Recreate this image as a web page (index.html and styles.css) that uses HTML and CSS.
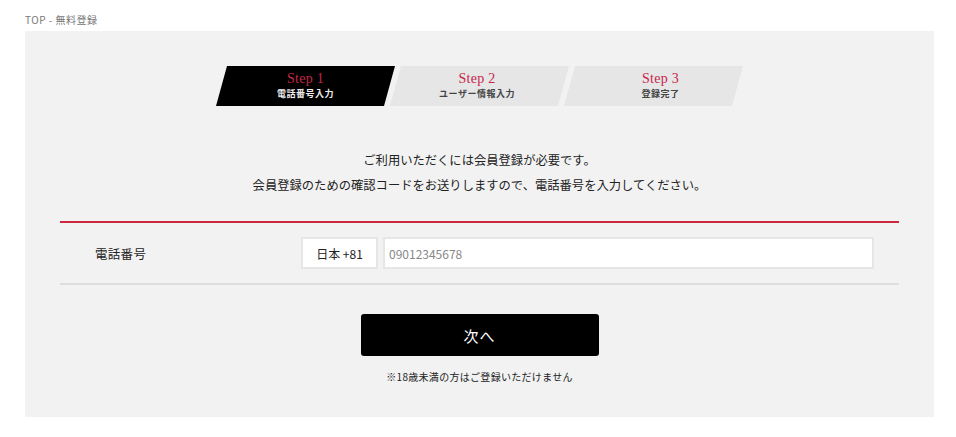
FILE: index.html
```html
<!DOCTYPE html>
<html lang="ja">
<head>
<meta charset="utf-8">
<link rel="stylesheet" href="styles.css">
</head>
<body>
<div class="breadcrumb">TOP - 無料登録</div>
<main class="panel">
  <ol class="steps">
    <li class="step active"><span class="step-num">Step 1</span><span class="step-label">電話番号入力</span></li>
    <li class="step step-2"><span class="step-num">Step 2</span><span class="step-label">ユーザー情報入力</span></li>
    <li class="step step-3"><span class="step-num">Step 3</span><span class="step-label">登録完了</span></li>
  </ol>
  <p class="lead">ご利用いただくには会員登録が必要です。<br>会員登録のための確認コードをお送りしますので、電話番号を入力してください。</p>
  <div class="form-row">
    <div class="form-label">電話番号</div>
    <div class="form-fields">
      <div class="country">日本 +81</div>
      <div class="phone">09012345678</div>
    </div>
  </div>
  <div class="actions">
    <button class="next">次へ</button>
    <p class="note">※18歳未満の方はご登録いただけません</p>
  </div>
</main>
</body>
</html>
```
FILE: styles.css
```css
* { box-sizing: border-box; }
body {
  margin: 0;
  background: #fff;
  font-family: "Noto Sans CJK JP", "Noto Sans", sans-serif;
  color: #222;
}
.breadcrumb {
  padding: 13px 0 0 25px;
  height: 31px;
  font-size: 10px;
  line-height: 14px;
  color: #777;
  letter-spacing: 0.5px;
}
.panel {
  margin: 0 22px 0 25px;
  height: 386px;
  background: #f2f2f2;
  padding-top: 35px;
}
.steps {
  list-style: none;
  margin: 0;
  padding: 0;
  display: flex;
  justify-content: center;
}
.step {
  width: 179px;
  height: 40px;
  background: #e6e6e6;
  clip-path: polygon(11px 0, 100% 0, calc(100% - 11px) 100%, 0 100%);
  display: flex;
  flex-direction: column;
  align-items: center;
  padding-top: 4px;
}
.step + .step { margin-left: -5px; }
.step-2 { padding-right: 5px; }
.step-3 { padding-left: 14px; }
.step.active { background: #000; }
.step-num {
  font-family: "Liberation Serif", "DejaVu Serif", serif;
  font-size: 14px;
  line-height: 18px;
  color: #c8254a;
  letter-spacing: 0.3px;
}
.step-label {
  font-size: 9px;
  line-height: 12px;
  color: #444;
  letter-spacing: 0.5px;
  font-weight: 700;
}
.step.active .step-label { color: #eee; }
.lead {
  margin: 42px 0 0;
  text-align: center;
  font-size: 12.3px;
  line-height: 25px;
  letter-spacing: 0;
  color: #222;
}
.form-row {
  margin: 23px 35px 0;
  border-top: 2px solid #c9283f;
  border-bottom: 2px solid #dedede;
  display: flex;
  align-items: center;
  padding: 14px 25px 14px 0;
}
.form-label {
  width: 241px;
  padding-left: 35px;
  font-size: 12.5px;
  letter-spacing: 0.3px;
}
.form-fields {
  flex: 1;
  display: flex;
  gap: 5px;
}
.country, .phone {
  height: 32px;
  background: #fff;
  border: 2px solid #e6e6e6;
  font-size: 12px;
  display: flex;
  align-items: center;
}
.country {
  width: 77px;
  justify-content: center;
  color: #222;
}
.phone {
  flex: 1;
  padding-left: 4px;
  color: #888;
}
.actions {
  display: flex;
  flex-direction: column;
  align-items: center;
  padding-top: 29px;
}
.next {
  width: 238px;
  height: 42px;
  background: #000;
  color: #fff;
  border: 0;
  border-radius: 3px;
  font-family: "Noto Sans CJK JP", sans-serif;
  font-size: 15px;
  letter-spacing: 1px;
}
.note {
  margin: 13px 0 0;
  font-size: 10px;
  line-height: 16px;
  letter-spacing: 0.3px;
  color: #222;
}
```
